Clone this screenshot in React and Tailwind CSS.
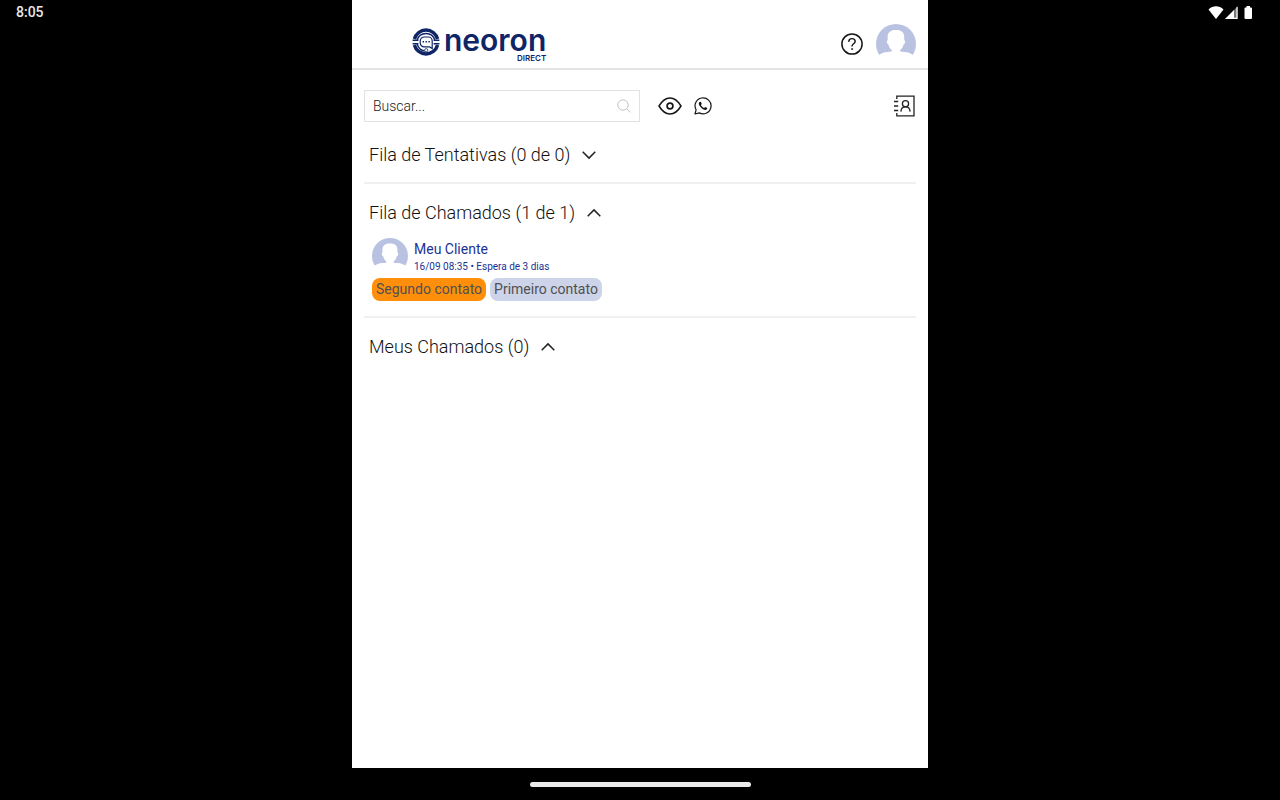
import { useState } from "react";

function Avatar({ className }) {
  return (
    <svg viewBox="0 0 40 40" className={className} aria-hidden="true">
      <circle cx="20" cy="20" r="20" fill="#b9c3e1" />
      <path
        fill="#fff"
        d="M20 6C24.5 6 28 7.5 28.2 12.5L28.3 16.2C29.6 16.4 29.4 19.5 27.6 20.4C26.9 23.2 25.6 25 24 26.3C24 28 25.4 27.7 28.5 27.9C32 28.1 35 29.2 37.5 31.2L40 40H0L2.5 31.2C5 29.2 8 28.1 11.5 27.9C14.6 27.7 16 28 16 26.3C14.4 25 13.1 23.2 12.4 20.4C10.6 19.5 10.4 16.4 11.7 16.2L11.6 12.5C11.8 7.5 15.5 6 20 6Z"
      />
    </svg>
  );
}

function Logo() {
  return (
    <a href="#" aria-label="neoron direct" className="flex text-[#0f2566]">
      <svg viewBox="0 0 28 28" className="w-7 h-7 shrink-0" fill="none" aria-hidden="true">
        <path d="M2.4 11A12 12 0 0 1 25.6 11" stroke="currentColor" strokeWidth="3.4" />
        <path d="M2.4 17A12 12 0 0 0 25.6 17" stroke="currentColor" strokeWidth="3.4" />
        <path d="M0.6 12.2H6.4M21.6 12.2H27.4M0.6 15.8H6.4M21.6 15.8H27.4" stroke="currentColor" strokeWidth="1.4" />
        <path d="M5.2 12A9.2 9.2 0 0 1 22.8 12M5.2 16A9.2 9.2 0 0 0 12.8 23" stroke="currentColor" strokeWidth="1.3" />
        <path d="M20.2 20.6L17.6 18.9H12.2A4 4 0 0 1 8.2 14.9V13A4 4 0 0 1 12.2 9H16.2A4 4 0 0 1 20.2 13V20.6Z" stroke="currentColor" strokeWidth="1.2" />
        <path d="M10.6 13.8H12M13.5 13.8H14.9M16.4 13.8H17.8" stroke="currentColor" strokeWidth="1.5" />
        <circle cx="14.2" cy="22.2" r="1.6" fill="#fff" stroke="currentColor" strokeWidth="0.8" />
      </svg>
      <span className="flex flex-col items-end ml-1">
        <span className="font-[Inter,sans-serif] text-3xl leading-6 font-semibold">neoron</span>
        <span className="font-[Inter,sans-serif] text-[8px] leading-3 font-semibold">DIRECT</span>
      </span>
    </a>
  );
}

function HelpIcon() {
  return (
    <svg viewBox="0 0 22 22" className="w-[22px] h-[22px]" fill="none" stroke="#161616" strokeLinecap="round" aria-hidden="true">
      <circle cx="11" cy="11" r="10.1" strokeWidth="1.5" />
      <path d="M7.8 8.3C8 6.6 9.3 5.6 11 5.6C12.9 5.6 14.2 6.8 14.2 8.4C14.2 10.6 11 10.8 11 13" strokeWidth="1.4" />
      <circle cx="11" cy="16" r="0.6" fill="#161616" strokeWidth="0.6" />
    </svg>
  );
}

function EyeIcon() {
  return (
    <svg viewBox="0 0 24 24" className="w-6 h-6" fill="none" stroke="#161616" aria-hidden="true">
      <path d="M1 12C4 7 7.3 4 12 4S20 7 23 12C20 17 16.7 20 12 20S4 17 1 12Z" strokeWidth="1.5" strokeLinejoin="round" />
      <circle cx="12" cy="12" r="2.9" strokeWidth="1.7" />
    </svg>
  );
}

function WhatsappIcon() {
  return (
    <svg viewBox="0 0 18 18" className="w-[18px] h-[18px]" aria-hidden="true">
      <path d="M1 17L2.1 12.8A8 8 0 1 1 5.3 15.9L1 17Z" fill="none" stroke="#161616" strokeWidth="1.2" strokeLinejoin="round" />
      <path
        fill="#161616"
        d="M6.2 4.7C5.5 4.8 4.8 5.5 4.8 6.6C4.8 8.8 8.5 13 11.3 13C12.6 13 13.3 12.2 13.3 11.1C13.3 10.8 11.6 9.9 11.2 9.9C10.8 9.9 10.4 11 10 11C9.2 11 7 8.9 7 8.1C7 7.7 7.8 7.3 7.7 6.8C7.6 6.3 7 4.6 6.2 4.7Z"
      />
    </svg>
  );
}

function ContactsIcon() {
  return (
    <svg viewBox="0 0 22 22" className="w-[22px] h-[22px]" fill="none" stroke="#222" strokeWidth="1.3" aria-hidden="true">
      <path d="M2.8 4V1.2H20V20.8H2.8V18" />
      <path d="M0 6.5H4.2M0 11H4.2M0 15.5H4.2" />
      <circle cx="11.5" cy="8.7" r="3.1" />
      <path d="M6.9 16.6C7.1 13.6 9 11.9 11.5 11.9S15.9 13.6 16.1 16.6" />
    </svg>
  );
}

function Chevron({ open }) {
  return (
    <svg viewBox="0 0 14 14" className="w-3.5 h-3.5" fill="none" stroke="#222" strokeWidth="1.5" aria-hidden="true">
      <path d={open ? "M0.7 10.2L7 3.9L13.3 10.2" : "M0.7 3.8L7 10.1L13.3 3.8"} />
    </svg>
  );
}

function Section({ title, defaultOpen = false, children }) {
  const [open, setOpen] = useState(defaultOpen);

  return (
    <section className="pt-[17px] pb-[15px] border-b-2 border-[#f0f0f0] last:border-b-0">
      <h2>
        <button
          type="button"
          aria-expanded={open}
          onClick={() => setOpen(!open)}
          className="flex items-center gap-3 pl-[5px] text-lg leading-6 font-light text-[#111]"
        >
          {title}
          <Chevron open={open} />
        </button>
      </h2>
      {open && children}
    </section>
  );
}

function StatusIcons() {
  return (
    <svg viewBox="0 0 46 16" className="w-[46px] h-4" fill="#fff" aria-label="Wi-Fi, sinal, bateria">
      <path d="M8 15L0.5 5.6C4.8 1.2 11.2 1.2 15.5 5.6L8 15Z" />
      <path d="M17 15L29.5 2.5V15Z" fill="#777" />
      <path d="M17 15L26 6V15ZM28.4 3.6L29.6 2.4V15H26V13.8H28.4Z" />
      <path d="M36.5 4.5Q36.5 3.5 37.5 3.5H38.5V2H42V3.5H43Q44 3.5 44 4.5V14Q44 15 43 15H37.5Q36.5 15 36.5 14Z" />
    </svg>
  );
}

export default function App() {
  const [search, setSearch] = useState("");

  return (
    <div className="min-h-screen flex flex-col bg-black font-[Roboto,sans-serif]">
      <div className="flex-1 flex">
        <div className="flex-1">
          <p className="pl-4 pt-0.5 text-sm leading-5 font-medium text-[#e8e8e8]">8:05</p>
        </div>

        <div className="w-full max-w-xl bg-white">
          <header className="flex items-start justify-between pl-[60px] pr-3 pt-6 pb-1 border-b-2 border-[#e4e4e4]">
            <div className="pt-1">
              <Logo />
            </div>
            <div className="flex items-center gap-[13px]">
              <button type="button" aria-label="Ajuda">
                <HelpIcon />
              </button>
              <button type="button" aria-label="Perfil">
                <Avatar className="w-10 h-10" />
              </button>
            </div>
          </header>

          <main className="px-3 pt-5">
            <div className="flex items-center">
              <div className="flex items-center w-1/2 h-8 px-2 border border-[#e2e2e2]">
                <input
                  type="text"
                  aria-label="Buscar"
                  placeholder="Buscar..."
                  value={search}
                  onChange={(e) => setSearch(e.target.value)}
                  className="flex-1 min-w-0 text-sm font-light text-[#222] placeholder:text-[#222] outline-none"
                />
                <svg viewBox="0 0 14 14" className="w-3.5 h-3.5" fill="none" stroke="#c4c4c4" aria-hidden="true">
                  <circle cx="6" cy="6" r="5.2" />
                  <path d="M9.8 9.8L13.5 13.3" />
                </svg>
              </div>
              <button type="button" aria-label="Visualizar" className="ml-[18px]">
                <EyeIcon />
              </button>
              <button type="button" aria-label="WhatsApp" className="ml-3">
                <WhatsappIcon />
              </button>
              <button type="button" aria-label="Contatos" className="ml-auto">
                <ContactsIcon />
              </button>
            </div>

            <div className="pt-1">
              <Section title="Fila de Tentativas (0 de 0)" />

              <Section title="Fila de Chamados (1 de 1)" defaultOpen>
                <div className="pl-2 pt-[13px]">
                  <a href="#" className="flex gap-1.5 text-[#1c3296]">
                    <Avatar className="w-9 h-9" />
                    <div>
                      <p className="text-sm leading-[22px]">Meu Cliente</p>
                      <p className="text-[10px] leading-[14px]">16/09 08:35 • Espera de 3 dias</p>
                    </div>
                  </a>
                  <div className="flex gap-1 pt-1 text-sm leading-[23px] text-[#505050]">
                    <span className="px-1 rounded-lg bg-[#ff8f0a]">Segundo contato</span>
                    <span className="px-1 rounded-lg bg-[#cdd3e8]">Primeiro contato</span>
                  </div>
                </div>
              </Section>

              <Section title="Meus Chamados (0)" defaultOpen />
            </div>
          </main>
        </div>

        <div className="flex-1">
          <div className="flex justify-end pt-1 pr-[26px]">
            <StatusIcons />
          </div>
        </div>
      </div>

      <div className="h-8 flex justify-center items-center">
        <div className="w-[221px] h-[5px] rounded-full bg-[#eaeaea]" />
      </div>
    </div>
  );
}
